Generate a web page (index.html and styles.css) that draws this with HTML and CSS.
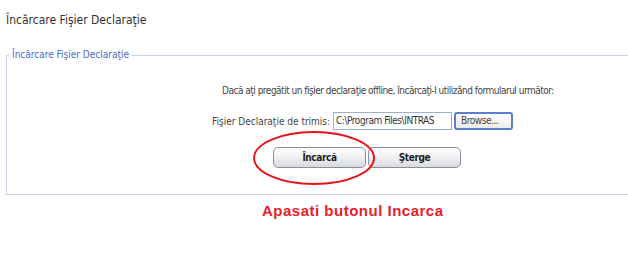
FILE: index.html
```html
<!DOCTYPE html>
<html lang="ro">
<head>
<meta charset="utf-8">
<title>Încărcare Fişier Declaraţie</title>
<link rel="stylesheet" href="styles.css">
</head>
<body>
<div class="title">Încărcare Fişier Declaraţie</div>
<fieldset class="box">
  <legend class="legend">Încărcare Fişier Declaraţie</legend>
  <p class="intro">Dacă aţi pregătit un fişier declaraţie offline, încărcaţi-l utilizând formularul următor:</p>
  <div class="file-row">
    <span class="label">Fişier Declaraţie de trimis:</span>
    <span class="file-input">C:\Program Files\INTRAS</span>
    <span class="browse">Browse...</span>
  </div>
  <div class="actions">
    <span class="btn-wrap">
      <span class="btn">Încarcă</span>
      <svg class="ring" width="124" height="56" viewBox="0 0 124 56"><ellipse cx="62" cy="28" rx="60" ry="26" fill="none" stroke="#e8141c" stroke-width="2"/></svg>
    </span>
    <span class="btn">Şterge</span>
  </div>
</fieldset>
<p class="hint">Apasati butonul Incarca</p>
</body>
</html>
```
FILE: styles.css
```css
html, body {
  margin: 0;
  padding: 0;
  background: #ffffff;
}
body {
  width: 628px;
  height: 264px;
  overflow: hidden;
  font-family: "DejaVu Sans", "Liberation Sans", sans-serif;
  font-stretch: condensed;
  color: #444;
}
.title {
  padding: 13px 0 0 6px;
  height: 14px;
  line-height: 14px;
  font-size: 12px;
  color: #333;
  letter-spacing: 0;
}
.box {
  margin: 22px 0 0 6px;
  padding: 0;
  border: 1px solid #c8cfe6;
  border-right: none;
  height: 146px;
  box-sizing: border-box;
}
.legend {
  margin-left: 2px;
  padding: 0 3px;
  font-size: 10px;
  color: #4a6ad0;
  letter-spacing: 0;
  line-height: 12px;
}
.intro {
  margin: 24px 0 0 215px;
  font-size: 10px;
  line-height: 12px;
  letter-spacing: -0.5px;
  color: #444;
  white-space: nowrap;
}
.file-row {
  display: flex;
  align-items: center;
  margin: 15px 0 0 205px;
  height: 18px;
  font-size: 10px;
  letter-spacing: -0.45px;
}
.label {
  width: 121px;
  white-space: nowrap;
  letter-spacing: 0;
}
.file-input {
  box-sizing: border-box;
  width: 119px;
  height: 18px;
  line-height: 16px;
  border: 1px solid #9eb0d0;
  padding-left: 2px;
  white-space: nowrap;
  overflow: hidden;
  color: #333;
}
.browse {
  box-sizing: border-box;
  margin-left: 2px;
  width: 59px;
  height: 18px;
  line-height: 14px;
  border: 2px solid #5a7ed0;
  border-radius: 3px;
  padding-left: 5px;
  background: linear-gradient(#ffffff, #ececec);
  color: #444;
}
.actions {
  display: flex;
  margin: 17px 0 0 266px;
  gap: 2px;
}
.btn-wrap {
  position: relative;
  display: flex;
}
.btn {
  box-sizing: border-box;
  width: 93px;
  height: 21px;
  line-height: 19px;
  border: 1px solid #8a8f9c;
  border-radius: 5px;
  background: linear-gradient(#ffffff 0%, #f2f2f4 45%, #d9dae0 100%);
  text-align: center;
  font-size: 10px;
  font-weight: bold;
  color: #222;
  letter-spacing: -0.4px;
}
.ring {
  position: absolute;
  left: -21px;
  top: -17px;
}
.hint {
  margin: 8px 0 0 262px;
  font-family: "Liberation Sans", "DejaVu Sans", sans-serif;
  font-stretch: normal;
  font-size: 15px;
  line-height: 16px;
  font-weight: bold;
  color: #e8202a;
  letter-spacing: 0.5px;
}
```
